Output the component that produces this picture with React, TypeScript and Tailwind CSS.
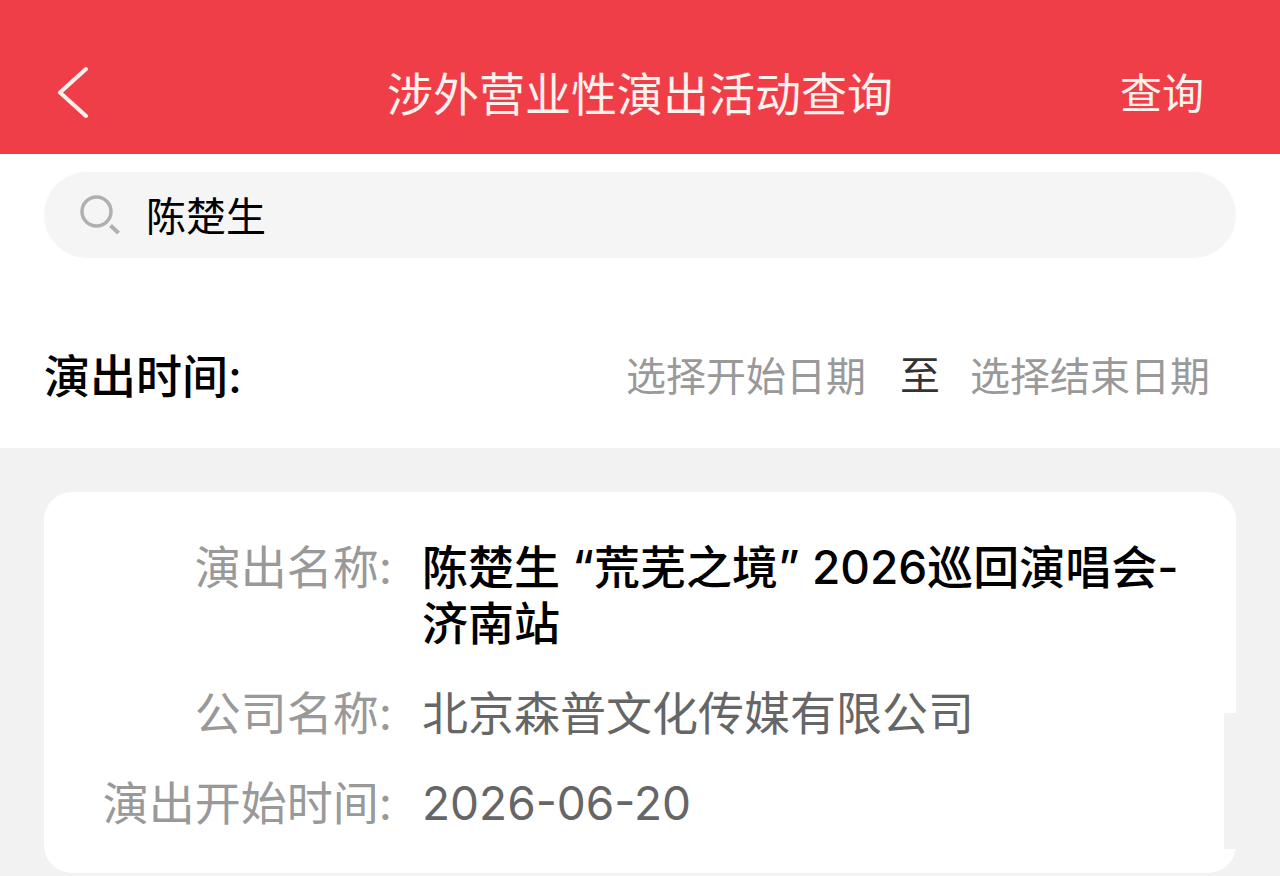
import { useState } from 'react';

const performances = [
    {
        id: 1,
        name: '陈楚生 “荒芜之境” 2026巡回演唱会-济南站',
        company: '北京森普文化传媒有限公司',
        startDate: '2026-06-20',
    },
];

const BackIcon = () => (
    <svg className="h-14 w-8" viewBox="0 0 32 56" fill="none" stroke="currentColor" strokeWidth={4} strokeLinecap="round" strokeLinejoin="round">
        <path d="M30 3L4 26.5L30 50" />
    </svg>
);

const SearchIcon = () => (
    <svg className="h-10 w-10 shrink-0 text-[#b0b0b0]" viewBox="0 0 40 40" fill="none" stroke="currentColor" strokeWidth={3.5}>
        <circle cx="16.5" cy="16.5" r="14.5" />
        <path d="M30.5 30.5L38.5 38" strokeWidth={4} />
    </svg>
);

const Header = () => (
    <header className="grid grid-cols-[1fr_auto_1fr] items-center bg-[#f03e49] px-14 pt-[34px] text-[#fff1ec]">
        <button type="button" aria-label="返回" className="flex h-[120px] items-center justify-self-start">
            <BackIcon />
        </button>
        <h1 className="text-[46px] leading-[56px]">涉外营业性演出活动查询</h1>
        <button type="submit" form="search-form" className="justify-self-end pr-5 text-[42px] leading-[56px]">
            查询
        </button>
    </header>
);

const SearchForm = () => {
    const [keyword, setKeyword] = useState('陈楚生');
    const [startDate, setStartDate] = useState('');
    const [endDate, setEndDate] = useState('');

    return (
        <form id="search-form" className="bg-white px-11 pt-[18px] pb-11" onSubmit={(e) => e.preventDefault()}>
            <label className="flex h-[86px] items-center gap-[26px] rounded-full bg-[#f5f5f6] px-9">
                <SearchIcon />
                <input
                    type="text"
                    aria-label="搜索"
                    value={keyword}
                    onChange={(e) => setKeyword(e.target.value)}
                    className="h-14 min-w-0 flex-1 bg-transparent pt-1 text-[40px] text-black outline-none"
                />
            </label>

            <div className="mt-[90px] flex items-center justify-between pr-[22px]">
                <span className="text-[46px] leading-[56px] font-medium text-black">演出时间:</span>
                <div className="flex items-center gap-[30px] text-[40px] leading-[56px]">
                    <input
                        type="text"
                        aria-label="开始日期"
                        placeholder="选择开始日期"
                        value={startDate}
                        onChange={(e) => setStartDate(e.target.value)}
                        className="h-14 w-[244px] pt-[2px] outline-none placeholder:text-[#999999]"
                    />
                    <span className="text-[#333333]">至</span>
                    <input
                        type="text"
                        aria-label="结束日期"
                        placeholder="选择结束日期"
                        value={endDate}
                        onChange={(e) => setEndDate(e.target.value)}
                        className="h-14 w-[244px] pt-[2px] outline-none placeholder:text-[#999999]"
                    />
                </div>
            </div>
        </form>
    );
};

const PerformanceCard = ({ item }: { item: (typeof performances)[number] }) => (
    <article className="relative rounded-[28px] bg-white pt-[47px] pr-10 pb-[42px] pl-5">
        <dl className="grid grid-cols-[328px_1fr] gap-x-[30px] gap-y-[34px] text-[46px] leading-[56px]">
            <dt className="text-right text-[#999999]">演出名称:</dt>
            <dd className="font-medium text-black">{item.name}</dd>
            <dt className="text-right text-[#999999]">公司名称:</dt>
            <dd className="text-[#666666]">{item.company}</dd>
            <dt className="text-right text-[#999999]">演出开始时间:</dt>
            <dd className="text-[#666666]">{item.startDate}</dd>
        </dl>
        {/* notch along the right edge */}
        <div className="absolute right-0 bottom-6 h-[136px] w-3 bg-[#f2f2f2]" />
    </article>
);

const App = () => (
    <div lang="zh-CN" className="flex min-h-screen flex-col bg-[#f2f2f2] font-['Inter','Noto_Sans_CJK_SC',sans-serif]">
        <Header />
        <SearchForm />
        <main className="px-11 pt-11">
            {performances.map((item) => (
                <PerformanceCard key={item.id} item={item} />
            ))}
        </main>
    </div>
);

export default App;
